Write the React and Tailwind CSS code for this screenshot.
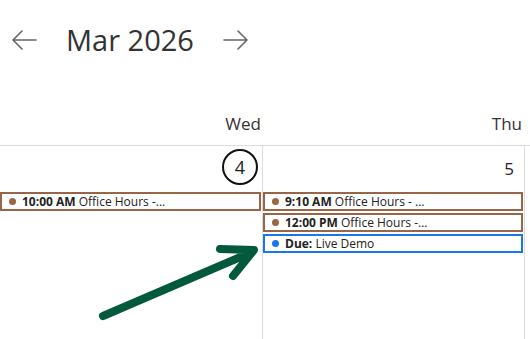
import React from 'react';

const BROWN = 'border-[#9a6546]';

function ArrowIcon({ dir }) {
    const d = dir === 'left' ? 'M25 12H2M11 3l-9 9 9 9' : 'M1 12h23M15 3l9 9-9 9';
    return (
        <svg width="27" height="24" viewBox="0 0 27 24" fill="none" stroke="#666" strokeWidth="1.6" strokeLinecap="round" strokeLinejoin="round">
            <path d={d} />
        </svg>
    );
}

function EventChip({ time, label, color = 'brown' }) {
    const border = color === 'blue' ? 'border-[#1a76f0]' : BROWN;
    const dot = color === 'blue' ? 'bg-[#1a76f0]' : 'bg-[#9a6546]';
    return (
        <div className={`mr-px flex h-[19px] items-center gap-[6px] border-2 ${border} bg-white pl-[7px] text-[12px] text-[#222]`}>
            <span className={`size-[7px] shrink-0 rounded-full ${dot}`} />
            <span className="truncate leading-[15px]">
                <b className="font-bold">{time}</b> {label}
            </span>
        </div>
    );
}

export default function App() {
    return (
        <div className="relative h-[339px] w-[530px] overflow-hidden bg-white font-['Open_Sans',sans-serif] text-[#333]">
            {/* month switcher */}
            <div className="flex h-[79px] items-center pl-[11px]">
                <ArrowIcon dir="left" />
                <h1 className="ml-[28px] text-[29px] font-normal text-[#333]">Mar 2026</h1>
                <div className="ml-[29px]">
                    <ArrowIcon dir="right" />
                </div>
            </div>

            {/* weekday header */}
            <div className="flex h-[66px] items-end pb-[9px] text-[17px]">
                <div className="w-[263px] pr-[2px] text-right">Wed</div>
                <div className="w-[262px] pr-[3px] text-right">Thu</div>
            </div>

            {/* day cells */}
            <div className="flex h-[200px] border-t border-[#ddd]">
                <div className="w-[263px] border-r border-[#ddd]">
                    <div className="flex h-[46px] justify-end pr-[4px] pt-[3px]">
                        <span className="flex size-[36px] items-center justify-center rounded-full border-2 border-[#111] text-[18px] text-[#222]">4</span>
                    </div>
                    <EventChip time="10:00 AM" label="Office Hours -..." />
                </div>
                <div className="w-[262px] border-r border-[#ddd]">
                    <div className="flex h-[46px] justify-end pr-[10px] pt-[10px] text-[17px] text-[#222]">5</div>
                    <div className="flex flex-col gap-[2px]">
                        <EventChip time="9:10 AM" label="Office Hours - ..." />
                        <EventChip time="12:00 PM" label="Office Hours -..." />
                        <EventChip time="Due:" label="Live Demo" color="blue" />
                    </div>
                </div>
            </div>

            {/* pointer */}
            <svg className="absolute left-0 top-0" width="530" height="339" fill="none" stroke="#03593b" strokeWidth="8" strokeLinecap="round" strokeLinejoin="round">
                <path d="M103 316L252 252M220 249l34 1-21 26" />
            </svg>
        </div>
    );
}
